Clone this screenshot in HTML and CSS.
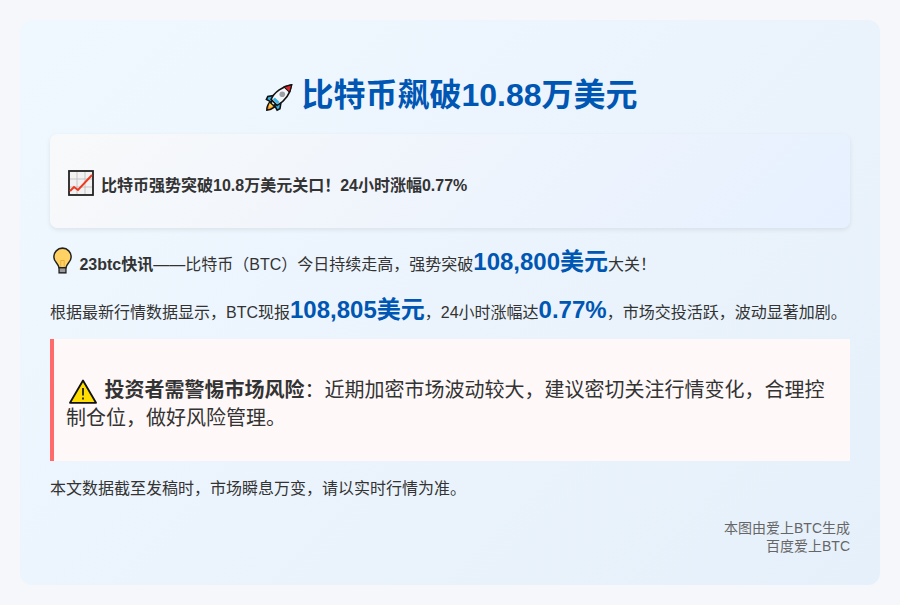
FILE: index.html
```html
<!DOCTYPE html>
<html lang="zh-CN">
<head>
<meta charset="utf-8">
<title>比特币飙破10.88万美元</title>
<link rel="stylesheet" href="styles.css">
</head>
<body>
<main class="card">
  <h1 class="title"><svg class="ico ico-rocket" viewBox="0 0 30 30"><path d="M5 20 Q1.500 25 2 28.500 Q6 28.500 10.500 25 Z" fill="#f58a1f" stroke="#111" stroke-width="1.700"/><path d="M5 21 Q4 24 4.500 26 Q7 25.500 8.500 24 Z" fill="#ffd24a"/><path d="M9 13 L3 14 L1.500 17 L7 20 Z" fill="#35b4ea" stroke="#111" stroke-width="1.700"/><path d="M17 21 L16 27 L13 28.500 L10 23 Z" fill="#35b4ea" stroke="#111" stroke-width="1.700"/><path d="M6.500 17 C10 9 19 3 28.500 1.500 C27 11 21 19 13 23.500 Z" fill="#f4f6f8" stroke="#111" stroke-width="1.700"/><path d="M20.500 3.800 C24 2.600 26 2 28.500 1.500 C28 4 27.400 6.600 26.300 9.500 Z" fill="#d8262c" stroke="#111" stroke-width="1.200"/><circle cx="18.500" cy="11.500" r="3" fill="#9aa0a6"/><path d="M9.500 16 L14.500 21" stroke="#35b4ea" stroke-width="3"/></svg> 比特币飙破10.88万美元</h1>
  <section class="summary"><svg class="ico ico-chart" viewBox="0 0 26 26"><rect x="1" y="1" width="24" height="24" fill="#f2f2f2" stroke="#222" stroke-width="1.800"/><path d="M9 2V24M17 2V24M2 9H24M2 17H24" stroke="#c4c4c4" stroke-width="1"/><path d="M2 21 L6 17 L10 20 L24 5" fill="none" stroke="#f0391e" stroke-width="2"/></svg> <strong>比特币强势突破10.8万美元关口！24小时涨幅0.77%</strong></section>
  <p class="para first"><svg class="ico ico-bulb" viewBox="0 0 22 28" preserveAspectRatio="none"><path d="M11 1.200 C5 1.200 1 5.500 1 10.500 C1 15 6 17 7 21.500 L15 21.500 C16 17 21 15 21 10.500 C21 5.500 17 1.200 11 1.200 Z" fill="#ffd263" stroke="#222" stroke-width="1.700"/><path d="M9 21 L9 14 L13 14 L13 21" fill="none" stroke="#e8a93a" stroke-width="1"/><rect x="7" y="21.500" width="8" height="5.300" fill="#9a9a9a" stroke="#222" stroke-width="1.500"/></svg> <strong>23btc快讯</strong>——比特币（BTC）今日持续走高，强势突破<b class="hl">108,800美元</b>大关！</p>
  <p class="para second">根据最新行情数据显示，BTC现报<b class="hl">108,805美元</b>，24小时涨幅达<b class="hl">0.77%</b>，市场交投活跃，波动显著加剧。</p>
  <aside class="warn"><svg class="ico ico-warn" viewBox="0 0 28 25"><path d="M14 1.500 L27 23.800 L1 23.800 Z" fill="#ffdd00" stroke="#111" stroke-width="1.800" stroke-linejoin="round"/><path d="M14 9 V16.500 M14 18.500 V20.500" stroke="#333" stroke-width="2"/></svg> <strong>投资者需警惕市场风险</strong>：近期加密市场波动较大，建议密切关注行情变化，合理控制仓位，做好风险管理。</aside>
  <p class="para note">本文数据截至发稿时，市场瞬息万变，请以实时行情为准。</p>
  <footer class="foot">本图由爱上BTC生成<br>百度爱上BTC</footer>
</main>
</body>
</html>
```
FILE: styles.css
```css
html, body { margin: 0; padding: 0; }
body {
  background: #f5f7fa;
  padding: 20px;
  height: 605px;
  box-sizing: border-box;
  font-family: "Liberation Sans", "Noto Sans CJK SC", sans-serif;
  color: #333;
}
.card {
  height: 565px;
  box-sizing: border-box;
  padding: 30px;
  border-radius: 12px;
  background: linear-gradient(135deg, #f0f8ff, #e6f0fa);
}
.title {
  margin: 23px 0 17px;
  text-align: center;
  font-size: 32px;
  line-height: 44px;
  color: #0056b3;
}
.summary {
  height: 94px;
  box-sizing: border-box;
  display: flex;
  align-items: center;
  gap: 7px;
  padding: 6px 18px 0;
  border-radius: 8px;
  background: linear-gradient(135deg, #f8f9fa, #e6f0ff);
  box-shadow: 0 2px 5px rgba(0,0,0,.08);
  font-size: 16px;
}
.para { margin: 0; font-size: 16px; line-height: 28px; }
.first { margin-top: 20px; height: 30px; }
.second { margin-top: 18px; height: 30px; }
.hl { font-size: 24px; color: #0056b3; }
.warn {
  margin-top: 13px;
  height: 122px;
  box-sizing: border-box;
  padding: 37px 12px 0 12px;
  border-left: 4px solid #ff6b6b;
  background: #fff8f8;
  font-size: 20px;
  line-height: 28px;
}
.note { margin-top: 14px; }
.foot { margin-top: 16px; text-align: right; font-size: 14px; line-height: 18.200px; color: #666; }
.ico { vertical-align: middle; }
.ico-rocket { width: 28px; height: 29px; margin-left: 2px; }
.ico-chart { width: 26px; height: 26px; flex: none; margin-top: -2px; }
.ico-bulb { width: 19px; height: 27px; margin: -10px 3px 0 3px; }
.ico-warn { width: 28px; height: 25px; margin: 0 2px 0 3px; }
```
